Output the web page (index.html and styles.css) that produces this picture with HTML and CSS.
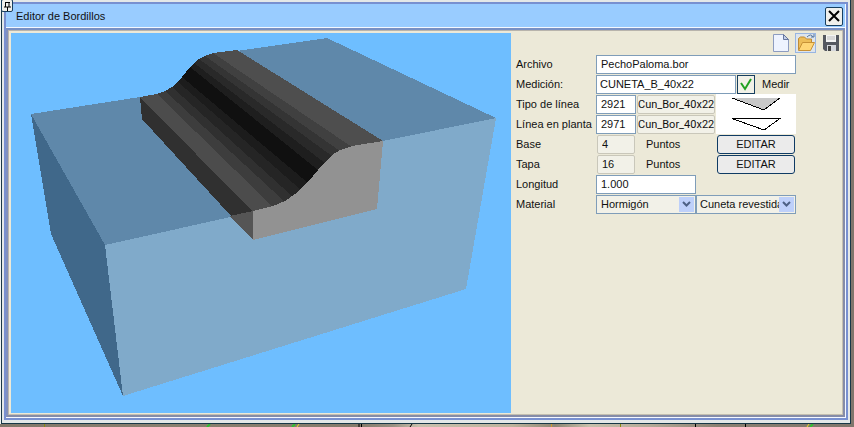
FILE: index.html
```html
<!DOCTYPE html>
<html lang="es">
<head>
<meta charset="utf-8">
<title>Editor de Bordillos</title>
<link rel="stylesheet" href="styles.css">
</head>
<body>
<main class="window">
  <div class="frame">
    <header class="titlebar">
      <button class="pin" type="button" aria-label="Fijar"><svg width="9" height="10" viewBox="0 0 9 10"><path d="M2.5 1v5M2 1.500h5M6 1v5M1 6h7M4.500 6v4" fill="none" stroke="#000"/></svg></button>
      <h1>Editor de Bordillos</h1>
      <button class="close" type="button" aria-label="Cerrar"><svg width="12" height="12" viewBox="0 0 12 12"><path d="M1 1l10 10M11 1L1 11" stroke="#000" stroke-width="2"/></svg></button>
    </header>
    <div class="content">
      <svg class="scene" viewBox="11 33 500 380" preserveAspectRatio="xMinYMin meet" role="img" aria-label="Vista 3D del bordillo" shape-rendering="crispEdges">
        <path fill="#5f88aa" d="M31 114L140 97L253 212L105 245ZM237 51L327 38L496 118L383 141Z"/>
        <path fill="#40688a" d="M31 114L105 245L123 396L51 234Z"/>
        <path fill="#80aaca" d="M105 245L253 212L383 141L496 118L466 289L123 396Z"/>
        <path fill="#303030" d="M140 97L253 211L253 240L142 119Z"/>
        <path fill="#555" d="M230 216L253 211V240Z"/>
        <path fill="#4c4c4c" d="M140 97L157 94L273 206L253 212Z"/>
        <path fill="#3d3d3d" d="M157 94L165 91L285 201L273 207Z"/>
        <path fill="#303030" d="M165 91L172 87L293 196L285 202Z"/>
        <path fill="#252525" d="M172 87L178 82L301 190L293 197Z"/>
        <path fill="#1c1c1c" d="M178 82L182 77L308 182L301 190Z"/>
        <path fill="#101010" d="M182 77L190 67L318 170L308 183Z"/>
        <path fill="#1e1e1e" d="M190 67L194 63L325 162L318 170Z"/>
        <path fill="#292929" d="M194 63L199 59L332 155L325 163Z"/>
        <path fill="#343434" d="M199 59L205 56L340 150L332 156Z"/>
        <path fill="#404040" d="M205 56L213 53L352 146L340 151Z"/>
        <path fill="#4e4e4e" d="M213 53L237 50L383 141L352 147Z"/>
        <path fill="#929292" d="M253 211L273 206L285 201L295 194L308 182L318 170L325 162L332 155L340 150L352 146L383 141L377 209L253 240Z"/>
      </svg>
      <form class="panel">
        <div class="tools">
          <button type="button" aria-label="Nuevo"><svg width="20" height="20" viewBox="0 0 20 20"><path d="M2.500 1.500h10l5 5v12h-15z" fill="#eef3ff" stroke="#8d9cc0"/><path d="M12.500 1.500v5h5z" fill="#c4cfe8" stroke="#67779e"/></svg></button>
          <button type="button" class="selected" aria-label="Abrir"><svg width="20" height="20" viewBox="0 0 20 20"><path d="M2.500 17V5.500l2-1.500h4l2 2h5v4" fill="#edbd58" stroke="#bf8b35"/><path d="M2.500 17.500l4-8h12l-4 8z" fill="#ffd676" stroke="#c79136"/><path d="M11 4q4-4 6 0M15 4h3V1" fill="none" stroke="#54749e"/></svg></button>
          <button type="button" aria-label="Guardar"><svg width="20" height="20" viewBox="0 0 20 20"><path d="M2 2h16v16H4l-2-2z" fill="#555860"/><path d="M5 2h10v7H5z" fill="#f4f4f4"/><path d="M6 4h8M6 6h8" stroke="#bbb"/><path d="M6 12h9v6H6z" fill="#d5d7dc"/><path d="M7 13h3v5H7z" fill="#444"/></svg></button>
        </div>
        <div class="row"><label for="archivo">Archivo</label><input id="archivo" class="wide" value="PechoPaloma.bor"></div>
        <div class="row"><label for="medicion">Medición:</label><input id="medicion" class="measure" value="CUNETA_B_40x22"><input id="medir" class="check" type="checkbox" checked><label for="medir" class="after">Medir</label></div>
        <div class="row"><label for="tipo">Tipo de línea</label><input id="tipo" class="short" value="2921"><input class="name" aria-label="Nombre de tipo de línea" value="Cun_Bor_40x22" readonly><svg class="preview" width="80" height="20" viewBox="0 0 80 20"><path d="M16 4h48L48 16z" fill="#c8c8c8"/><path d="M16 4l32 12L64 4" fill="none" stroke="#000" shape-rendering="crispEdges"/></svg></div>
        <div class="row"><label for="planta">Línea en planta</label><input id="planta" class="short" value="2971"><input class="name" aria-label="Nombre de línea en planta" value="Cun_Bor_40x22" readonly><svg class="preview" width="80" height="20" viewBox="0 0 80 20"><path d="M16 4.500h48L48 16z" fill="#fff" stroke="#000" shape-rendering="crispEdges"/></svg></div>
        <div class="row"><label for="base">Base</label><input id="base" class="count" value="4" readonly><span class="unit">Puntos</span><button class="edit" type="button">EDITAR</button></div>
        <div class="row"><label for="tapa">Tapa</label><input id="tapa" class="count" value="16" readonly><span class="unit">Puntos</span><button class="edit" type="button">EDITAR</button></div>
        <div class="row"><label for="longitud">Longitud</label><input id="longitud" class="half" value="1.000"></div>
        <div class="row"><label for="material">Material</label><span class="combo"><select id="material"><option>Hormigón</option></select><svg class="arrow" width="15" height="15" viewBox="0 0 15 15"><path d="M4 5l3.500 3.500L11 5" fill="none" stroke="#4d6185" stroke-width="2"/></svg></span><span class="combo"><select aria-label="Tipo de material"><option>Cuneta revestida</option></select><svg class="arrow" width="15" height="15" viewBox="0 0 15 15"><path d="M4 5l3.500 3.500L11 5" fill="none" stroke="#4d6185" stroke-width="2"/></svg></span></div>
      </form>
    </div>
  </div>
</main>
<svg class="ground" viewBox="0 0 854 3" preserveAspectRatio="none" aria-hidden="true">
  <path d="M44.500 0v3M620.500 0v3" stroke="#8a8a10"/>
  <path d="M210 0l-3 3M295 0l-3 3M813 0l-3 3" stroke="#30c030" stroke-width="2"/>
  <path d="M299 0l-2 3M809 0l-2 3" stroke="#f0e020"/>
  <path d="M551.500 0v3" stroke="#d09a30"/>
  <path d="M359 0v3M361.500 0v3M412 0l-2 3M695.500 0v3M745.500 0v3" stroke="#000"/>
</svg>
</body>
</html>
```
FILE: styles.css
```css
* { box-sizing: border-box; }
body {
  margin: 0;
  min-height: 100vh;
  display: flex;
  flex-direction: column;
  background: linear-gradient(90deg, #82786a 0%, #8a8070 20%, #857b6c 42%, #989082 46%, #c9c0ad 49%, #bdb39d 60%, #8e8674 65%, #c8c0ac 69%, #b4aa98 76%, #8a8072 84%, #80766c 100%);
  font: 11px/16px "Liberation Sans", Arial, sans-serif;
  color: #111;
}
button, input, select { font: inherit; color: inherit; margin: 0; border-radius: 0; }
.window {
  flex: 1;
  display: flex;
  margin: 0 3px 0 1px;
  padding: 2px 2px 3px;
  border: solid #173747;
  border-width: 0 1px 1px;
  background: #e4e8e8;
  box-shadow: -1px 0 #f0f4f4;
}
.frame {
  flex: 1;
  min-width: 0;
  display: flex;
  flex-direction: column;
  padding: 0 1px 1px 0;
  border: 2px solid #7890d0;
  background: #f4f8ff;
}
.titlebar {
  display: flex;
  align-items: center;
  height: 24px;
  padding: 1px 2px 0 10px;
  background: #99ccff;
  border-bottom: 1px solid #f4f8ff;
}
.titlebar h1 { margin: 0; flex: 1; font-size: 11px; font-weight: normal; }
.pin, .close { display: grid; place-items: center; padding: 0; border: 1px solid #173f60; border-radius: 2px; background: #f0f0ec; }
.pin { position: absolute; left: 1px; top: -1px; width: 12px; height: 13px; }
.close { width: 18px; height: 19px; }
.content {
  flex: 1;
  display: flex;
  background: #ece9d8;
  border: 2px solid #858ca8;
  border-top-color: #7890c4;
  border-left-color: #8090bc;
  padding: 3px 0 2px 3px;
  box-shadow: inset 1px 1px #b8b4ac, inset -1px -1px #c4bfb0;
}
.scene { flex: 500 1 0; min-width: 0; background: #6ebeff; }
.panel { flex: 327 1 0; min-width: 0; padding-left: 5px; }
.tools { display: flex; justify-content: flex-end; gap: 4px; height: 21px; padding-right: 2px; }
.tools button { display: grid; place-items: center; width: 21px; height: 20px; padding: 0; border: 0; background: none; }
.tools .selected { box-shadow: inset 0 0 0 1px #98b5e2; background: #dde4ec; }
.row { display: flex; align-items: center; height: 20px; }
.row > label:first-child { width: 80px; }
.row input { height: 19px; padding: 0 4px; border: 1px solid #7f9db9; background: #fff; }
.row .wide { width: 200px; }
.row .measure { width: 140px; padding: 0 3px; }
.row .short { width: 40px; }
.row .half { width: 100px; }
.row .name, .row .count { background: #f2f1e8; border-color: #c9c7ba; border-radius: 2px; }
.row .name { width: 78px; margin: 0 1px; padding: 0; font-family: Roboto, "Liberation Sans", sans-serif; }
.row .count { width: 38px; margin: 0 1px; }
.row .check { appearance: none; width: 18px; margin-left: 1px; padding: 0; border-color: #173f60; background: #f2f1e8 center/16px url("data:image/svg+xml,%3Csvg xmlns='http://www.w3.org/2000/svg' viewBox='0 0 16 16'%3E%3Cpath d='M3 7l4 6 6-10' fill='none' stroke='%2321a121' stroke-width='2'/%3E%3C/svg%3E") no-repeat; }
.after { margin-left: 7px; }
.preview { background: #fff; }
.unit { width: 81px; padding-left: 10px; }
.edit { width: 78px; height: 19px; padding: 0; border: 1px solid #0f3b64; border-radius: 3px; background: #ebebeb; }
.combo { position: relative; display: flex; width: 100px; }
.combo select { appearance: none; width: 100%; height: 19px; padding: 0 16px 0 4px; border: 1px solid #7f9db9; background: #f2f1e8; }
.combo + .combo select { padding-left: 3px; }
.arrow { position: absolute; right: 2px; top: 2px; background: #bed0fa; pointer-events: none; }
.ground { display: block; width: 100%; height: 3px; }
```
